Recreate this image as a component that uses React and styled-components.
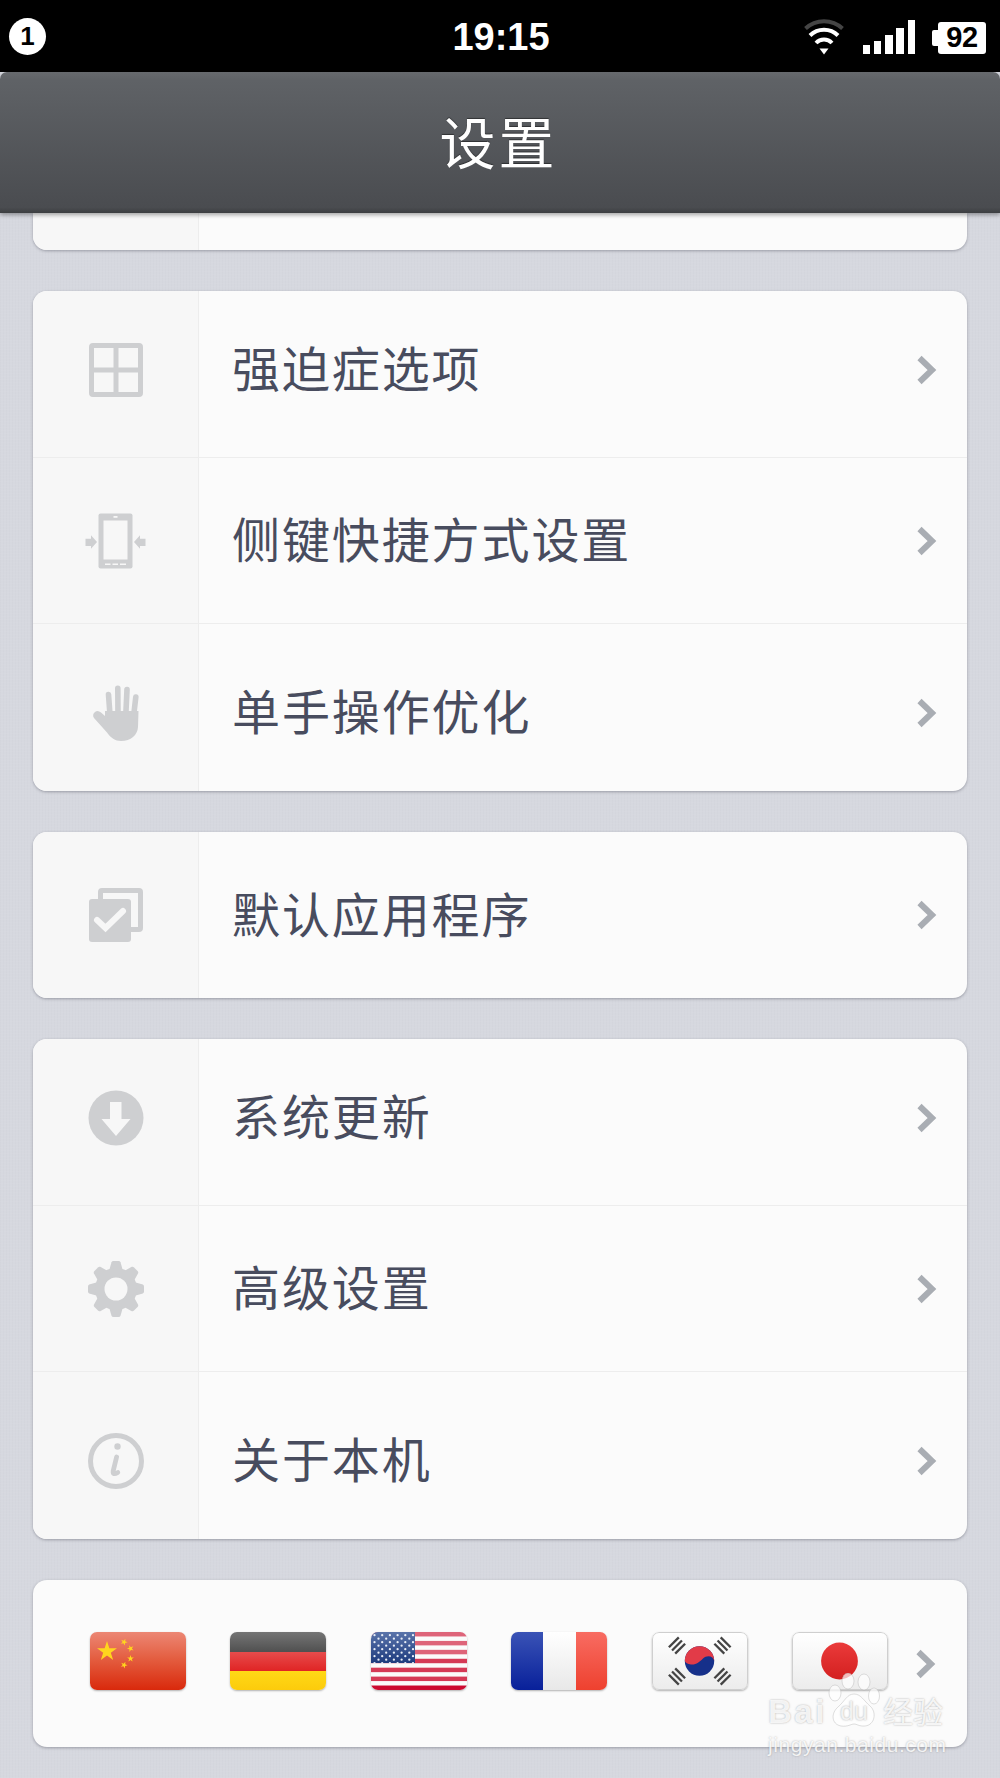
import React from "react";
import styled, { createGlobalStyle } from "styled-components";

const GlobalStyle = createGlobalStyle`
  html, body {
    margin: 0;
    padding: 0;
    background: #000;
  }
  * {
    box-sizing: border-box;
  }
`;

const CJK = `"Noto Sans CJK SC", "Noto Sans", sans-serif`;
const ICON = "#cecfd1";
const CELL = "#f7f7f7";

const Page = styled.div`
  position: relative;
  width: 1000px;
  height: 1778px;
  overflow: hidden;
  background-color: #d6d8df;
  background-image:
    repeating-linear-gradient(0deg, rgba(255, 255, 255, 0.035) 0 1px, transparent 1px 3px),
    repeating-linear-gradient(90deg, rgba(90, 95, 110, 0.02) 0 1px, transparent 1px 3px);
  font-family: ${CJK};
`;

const StatusBar = styled.div`
  position: relative;
  height: 72px;
  background: #000;
  display: grid;
  grid-template-columns: 1fr auto 1fr;
  align-items: center;
  padding: 0 14px 0 9px;
`;

const Badge = styled.div`
  width: 37px;
  height: 37px;
  border-radius: 50%;
  background: #fff;
  color: #000;
  display: flex;
  align-items: center;
  justify-content: center;
  font: bold 26px "Liberation Sans", sans-serif;
`;

const Clock = styled.div`
  color: #fff;
  font: bold 38px "Liberation Sans", sans-serif;
  margin: 2px 0 0 7px;
`;

const StatusIcons = styled.div`
  display: flex;
  align-items: flex-end;
  justify-content: flex-end;
  height: 36px;
  margin-top: 1px;
`;

const SignalBars = styled.div`
  display: flex;
  align-items: flex-end;
  gap: 3.7px;
  height: 34px;
  margin-left: 16px;
  margin-bottom: 1px;
`;

const SignalBar = styled.div`
  width: 7.5px;
  height: ${({ $h }) => $h}px;
  background: #fff;
`;

const Battery = styled.div`
  position: relative;
  width: 48px;
  height: 32px;
  margin-left: 23px;
  margin-bottom: 1px;
  background: #fff;
  border-radius: 3px;
  color: #000;
  display: flex;
  align-items: center;
  justify-content: center;
  font: bold 29px "Liberation Sans", sans-serif;
  letter-spacing: -0.5px;

  &::before {
    content: "";
    position: absolute;
    left: -6px;
    top: 8px;
    width: 6px;
    height: 16px;
    background: #fff;
    border-radius: 2px 0 0 2px;
  }
`;

const Header = styled.header`
  position: relative;
  z-index: 2;
  height: 141px;
  border-radius: 7px 7px 0 0;
  background: linear-gradient(#676a6e 0, #5f6266 6%, #4a4c50 96%, #3c3e41 100%);
  box-shadow: 0 2px 4px rgba(0, 0, 0, 0.35);
  display: flex;
  align-items: center;
  justify-content: center;
`;

const Title = styled.h1`
  margin: 0 0 5px -3px;
  color: #fff;
  font-size: 56px;
  font-weight: 400;
  letter-spacing: 3px;
  line-height: 1;
  text-shadow: 0 -1px 1px rgba(0, 0, 0, 0.45);
`;

const List = styled.main`
  display: flex;
  flex-direction: column;
  gap: 41px;
  padding: 0 33px;
`;

const Card = styled.section`
  background: #fbfbfb;
  border-radius: ${({ $clipped }) => ($clipped ? "0 0 14px 14px" : "14px")};
  box-shadow: 0 1px 3px rgba(70, 72, 85, 0.42);
  overflow: hidden;
`;

const ClippedRow = styled.div`
  height: 37px;
  display: grid;
  grid-template-columns: 166px 1fr;
`;

const Row = styled.div`
  display: grid;
  grid-template-columns: 166px 1fr;
  height: 166px;
  border-top: ${({ $first }) => ($first ? "none" : "1px solid #ededed")};

  &:last-child:not(:first-child) {
    height: 168px;
  }
`;

const IconCell = styled.div`
  background: ${CELL};
  border-right: 1px solid #ededed;
  display: flex;
  align-items: center;
  justify-content: center;
  padding: ${({ $top }) => $top || 0}px 0 ${({ $bottom }) => $bottom || 0}px;
`;

const Body = styled.div`
  display: flex;
  align-items: center;
  justify-content: space-between;
  padding: ${({ $top }) => $top || 0}px 30px ${({ $bottom }) => $bottom || 0}px 33px;
`;

const Label = styled.span`
  color: #484c5e;
  font-size: 48px;
  font-weight: 400;
  letter-spacing: 1.9px;
  line-height: 1;
  margin-bottom: 7px;
`;

const Chevron = styled.svg`
  width: 20px;
  height: 30px;
  flex: none;
`;

const FlagRow = styled.div`
  display: flex;
  align-items: center;
  height: 167px;
  padding: 0 31px 0 57px;
`;

const Flags = styled.div`
  display: flex;
  gap: 44.4px;
  margin-top: -6px;
  flex: 1;
`;

const FlagFrame = styled.div`
  width: 96px;
  height: 58px;
  border-radius: 7px;
  overflow: hidden;
  box-shadow: 0 1px 2px rgba(0, 0, 0, 0.3);
  flex: none;

  svg {
    display: block;
  }
`;

const Watermark = styled.div`
  position: absolute;
  left: 768px;
  top: 1673px;
  width: 180px;
  color: rgba(255, 255, 255, 0.85);
  text-shadow: 0 0 2px rgba(110, 110, 110, 0.55);
  pointer-events: none;
`;

const WatermarkTop = styled.div`
  display: flex;
  align-items: flex-end;
  height: 54px;
`;

const WatermarkWord = styled.span`
  font: bold 33px "Liberation Sans", sans-serif;
  line-height: 30px;
  letter-spacing: 2.5px;
  width: 60px;
`;

const WatermarkCjk = styled.span`
  font-family: ${CJK};
  font-size: 30px;
  line-height: 34px;
  margin-left: 3px;
  white-space: nowrap;
`;

const PawBox = styled.div`
  position: relative;
  width: 52px;
  height: 54px;
`;

const PawText = styled.span`
  position: absolute;
  left: 12px;
  bottom: 3px;
  color: #f2f2f2;
  font: 25px "Liberation Sans", sans-serif;
  line-height: 25px;
`;

const WatermarkUrl = styled.div`
  font: 21px "Liberation Sans", sans-serif;
  line-height: 24px;
  letter-spacing: 0.55px;
  margin-top: 6px;
  white-space: nowrap;
`;

const starPoints = (cx, cy, r, rot = 0) => {
  const pts = [];
  for (let i = 0; i < 10; i++) {
    const rad = i % 2 ? r * 0.382 : r;
    const a = (Math.PI / 5) * i - Math.PI / 2 + rot;
    pts.push(`${(cx + rad * Math.cos(a)).toFixed(2)},${(cy + rad * Math.sin(a)).toFixed(2)}`);
  }
  return pts.join(" ");
};

const WifiIcon = () => (
  <svg width="46" height="36" viewBox="0 0 42 36" fill="none" strokeWidth="4">
    <path d="M2.5 9.5A27 27 0 0 1 39.5 9.5" stroke="#454545" />
    <path d="M7 16.5A20 20 0 0 1 35 16.5" stroke="#fff" />
    <path d="M13 24A11 11 0 0 1 29 24" stroke="#fff" />
    <path d="M16.5 29.5H25.5L21 35.5Z" fill="#fff" />
  </svg>
);

const GridIcon = () => (
  <svg width="54" height="54" viewBox="0 0 54 54" fill="none" stroke={ICON} strokeWidth="5">
    <rect x="2.5" y="2.5" width="49" height="49" rx="1.5" />
    <path d="M27 2V52M2 27H52" />
  </svg>
);

const PhoneIcon = () => (
  <svg width="62" height="56" viewBox="0 0 62 56">
    <rect x="13.5" y="0.5" width="34" height="55" rx="2" fill={ICON} />
    <rect x="18.5" y="7.5" width="24" height="39" fill={CELL} />
    <rect x="28.5" y="3" width="4" height="1.8" fill={CELL} />
    <path d="M20 50.5H25.5V52H20ZM27.5 50.5H33V52H27.5ZM35 50.5H41V52H35Z" fill={CELL} />
    <path d="M0.5 25.7H6V22.3L12 29L6 35.7V33H0.5Z" fill={ICON} />
    <path d="M60.5 25.7H55V22.3L49 29L55 35.7V33H60.5Z" fill={ICON} />
  </svg>
);

const HandIcon = () => (
  <svg width="47" height="56" viewBox="0 0 47 56" fill={ICON}>
    <path d="M3 27C5 25.5 7 26 9 27.5L13 31V26H46.5L46 42C45.5 50 39 56 29 56C23 56 19 53 15 47.5L2 33C0.5 31 1 28.5 3 27Z" />
    <g stroke={ICON} strokeWidth="5.6" strokeLinecap="round">
      <path d="M16.5 9.5L18 30" />
      <path d="M25.8 3.2L26 30" />
      <path d="M35 4.5L33.8 30" />
      <path d="M43.8 12L41.5 32" />
    </g>
  </svg>
);

const AppsIcon = () => (
  <svg width="54" height="54" viewBox="0 0 54 54" fill="none">
    <rect x="11.5" y="2.5" width="40" height="39" rx="1.5" stroke={ICON} strokeWidth="5" />
    <rect x="0" y="11" width="42" height="43" rx="3" fill={ICON} />
    <path d="M8 32L16.5 40L34 23" stroke={CELL} strokeWidth="6" strokeLinecap="round" />
  </svg>
);

const UpdateIcon = () => (
  <svg width="56" height="56" viewBox="0 0 56 56">
    <circle cx="28" cy="28" r="27.5" fill={ICON} />
    <path d="M22 12H33.5V29H42.5L28 46L13.5 29H22Z" fill={CELL} strokeLinejoin="round" />
  </svg>
);

const GearIcon = () => (
  <svg width="56" height="56" viewBox="0 0 56 56">
    {[0, 45, 90, 135, 180, 225, 270, 315].map((deg) => (
      <path key={deg} d="M21 10L23.5 1.2Q24 0 25.5 0H30.5Q32 0 32.5 1.2L35 10Z" fill={ICON} transform={`rotate(${deg} 28 28)`} />
    ))}
    <circle cx="28" cy="28" r="21" fill={ICON} />
    <circle cx="28" cy="28" r="11.5" fill={CELL} />
  </svg>
);

const InfoIcon = () => (
  <svg width="56" height="56" viewBox="0 0 56 56" fill="none" stroke={ICON}>
    <circle cx="28" cy="28" r="25.5" strokeWidth="5" />
    <circle cx="29.5" cy="13.5" r="3.2" fill={ICON} stroke="none" />
    <path d="M28.6 24L25.2 38Q24.6 42.5 29.8 39.5" strokeWidth="4.8" strokeLinecap="round" />
  </svg>
);

const Gradient = ({ id, stops }) => (
  <linearGradient id={id} x1="0" y1="0" x2="0" y2="1">
    {stops.map(([o, c]) => (
      <stop key={o} offset={o} stopColor={c} />
    ))}
  </linearGradient>
);

const ChinaFlag = () => (
  <svg width="96" height="58" viewBox="0 0 96 58">
    <defs>
      <Gradient id="cn" stops={[[0, "#ec8774"], [0.5, "#e35a3c"], [1, "#d9290c"]]} />
    </defs>
    <rect width="96" height="58" fill="url(#cn)" />
    <polygon points={starPoints(17, 19.5, 10.5)} fill="#ffd51e" />
    <polygon points={starPoints(34, 10, 3.6, 0.4)} fill="#ffd51e" />
    <polygon points={starPoints(40.5, 16.5, 3.6, 0.9)} fill="#ffd51e" />
    <polygon points={starPoints(40.5, 26.5, 3.6, 0)} fill="#ffd51e" />
    <polygon points={starPoints(34, 33, 3.6, 0.4)} fill="#ffd51e" />
  </svg>
);

const GermanyFlag = () => (
  <svg width="96" height="58" viewBox="0 0 96 58">
    <defs>
      <Gradient id="de1" stops={[[0, "#757575"], [1, "#505050"]]} />
      <Gradient id="de2" stops={[[0, "#e74c4c"], [1, "#e02424"]]} />
      <Gradient id="de3" stops={[[0, "#ffd916"], [1, "#fccb0c"]]} />
    </defs>
    <rect width="96" height="20" fill="url(#de1)" />
    <rect y="20" width="96" height="19" fill="url(#de2)" />
    <rect y="39" width="96" height="19" fill="url(#de3)" />
  </svg>
);

const UsaFlag = () => {
  const stripes = Array.from({ length: 7 }, (_, i) => i * 8.92);
  const stars = [];
  for (let r = 0; r < 9; r++) {
    const count = r % 2 ? 5 : 6;
    for (let c = 0; c < count; c++) {
      stars.push([(r % 2 ? 7.5 : 3.5) + c * 7.7, 3.2 + r * 3.5]);
    }
  }
  return (
    <svg width="96" height="58" viewBox="0 0 96 58">
      <defs>
        <Gradient id="us2" stops={[[0, "#5a74aa"], [1, "#1e3b7e"]]} />
      </defs>
      <rect width="96" height="58" fill="#fbfbfb" />
      {stripes.map((y) => (
        <rect key={y} y={y} width="96" height="4.46" fill={y < 22 ? "#de6479" : y < 45 ? "#d53a56" : "#cc0a30"} />
      ))}
      <rect width="44" height="31" fill="url(#us2)" />
      {stars.map(([x, y]) => (
        <circle key={`${x}-${y}`} cx={x} cy={y} r="1.15" fill="#e8edf6" />
      ))}
    </svg>
  );
};

const FranceFlag = () => (
  <svg width="96" height="58" viewBox="0 0 96 58">
    <defs>
      <Gradient id="fr1" stops={[[0, "#3a53b6"], [1, "#08209a"]]} />
      <Gradient id="fr2" stops={[[0, "#ffffff"], [1, "#e8e8e8"]]} />
      <Gradient id="fr3" stops={[[0, "#f86c62"], [1, "#ee412f"]]} />
    </defs>
    <rect width="32" height="58" fill="url(#fr1)" />
    <rect x="32" width="33" height="58" fill="url(#fr2)" />
    <rect x="65" width="31" height="58" fill="url(#fr3)" />
  </svg>
);

const Trigram = ({ x, y, deg }) => (
  <g transform={`translate(${x} ${y}) rotate(${deg})`} fill="#444">
    <rect x="-7" y="-5.6" width="14" height="2.3" />
    <rect x="-7" y="-1.15" width="14" height="2.3" />
    <rect x="-7" y="3.3" width="14" height="2.3" />
  </g>
);

const KoreaFlag = () => (
  <svg width="96" height="58" viewBox="0 0 96 58">
    <defs>
      <Gradient id="kr0" stops={[[0, "#ffffff"], [1, "#ececec"]]} />
    </defs>
    <rect x="0.5" y="0.5" width="95" height="57" rx="6.5" fill="url(#kr0)" stroke="#cfcfcf" />
    <Trigram x="25" y="13.5" deg={-45} />
    <Trigram x="70.5" y="13.5" deg={45} />
    <Trigram x="25" y="44.5" deg={45} />
    <Trigram x="70.5" y="44.5" deg={-45} />
    <circle cx="47.5" cy="29" r="14.7" fill="#16308a" />
    <path d="M32.8 29A14.7 14.7 0 0 1 62.2 29C61.5 23.5 54.5 23 51 26.5C47.5 30 44 33 39 32.5C35.5 32 33.5 31 32.8 29Z" fill="#e23b48" />
  </svg>
);

const JapanFlag = () => (
  <svg width="96" height="58" viewBox="0 0 96 58">
    <defs>
      <Gradient id="jp0" stops={[[0, "#ffffff"], [1, "#ececec"]]} />
      <Gradient id="jp1" stops={[[0, "#ea3a3a"], [1, "#d42020"]]} />
    </defs>
    <rect x="0.5" y="0.5" width="95" height="57" rx="6.5" fill="url(#jp0)" stroke="#cfcfcf" />
    <circle cx="47.5" cy="29" r="18.4" fill="url(#jp1)" />
  </svg>
);

const Arrow = () => (
  <Chevron viewBox="0 0 20 30" fill="none">
    <path d="M2.5 3L15 15L2.5 27" stroke="#a9adb3" strokeWidth="6" />
  </Chevron>
);

// content in the first and last row sits a bit off the row's centre
const SettingRow = ({ icon, label, first, top, bottom }) => (
  <Row $first={first}>
    <IconCell $top={top} $bottom={bottom}>{icon}</IconCell>
    <Body $top={top} $bottom={bottom}>
      <Label>{label}</Label>
      <Arrow />
    </Body>
  </Row>
);

const App = () => (
  <Page>
    <GlobalStyle />
    <StatusBar>
      <Badge>1</Badge>
      <Clock>19:15</Clock>
      <StatusIcons>
        <WifiIcon />
        <SignalBars>
          {[9, 13, 19, 26, 34].map((h) => (
            <SignalBar key={h} $h={h} />
          ))}
        </SignalBars>
        <Battery>92</Battery>
      </StatusIcons>
    </StatusBar>
    <Header>
      <Title>设置</Title>
    </Header>
    <List>
      <Card $clipped>
        <ClippedRow>
          <IconCell />
          <Body />
        </ClippedRow>
      </Card>
      <Card>
        <SettingRow first icon={<GridIcon />} label="强迫症选项" bottom={9} />
        <SettingRow icon={<PhoneIcon />} label="侧键快捷方式设置" />
        <SettingRow icon={<HandIcon />} label="单手操作优化" top={10} />
      </Card>
      <Card>
        <SettingRow first icon={<AppsIcon />} label="默认应用程序" />
      </Card>
      <Card>
        <SettingRow first icon={<UpdateIcon />} label="系统更新" bottom={9} />
        <SettingRow icon={<GearIcon />} label="高级设置" />
        <SettingRow icon={<InfoIcon />} label="关于本机" top={10} />
      </Card>
      <Card>
        <FlagRow>
          <Flags>
            <FlagFrame><ChinaFlag /></FlagFrame>
            <FlagFrame><GermanyFlag /></FlagFrame>
            <FlagFrame><UsaFlag /></FlagFrame>
            <FlagFrame><FranceFlag /></FlagFrame>
            <FlagFrame><KoreaFlag /></FlagFrame>
            <FlagFrame><JapanFlag /></FlagFrame>
          </Flags>
          <Arrow />
        </FlagRow>
      </Card>
    </List>
    <Watermark>
      <WatermarkTop>
        <WatermarkWord>Bai</WatermarkWord>
        <PawBox>
          <svg width="52" height="54" viewBox="0 0 52 54" fill="rgba(255,255,255,0.7)" stroke="rgba(150,150,150,0.3)">
            <ellipse cx="7" cy="20" rx="6" ry="8" />
            <ellipse cx="20" cy="8" rx="6" ry="8" />
            <ellipse cx="36" cy="9" rx="6" ry="8" />
            <ellipse cx="46" cy="23" rx="5.5" ry="8" />
            <path d="M26 21C33 21 36 28 42 33C49 39 47 52 37 53C31 53.5 29 51 26 51C23 51 20 54 13 53C3 51 3 40 10 34C17 28 19 21 26 21Z" />
          </svg>
          <PawText>du</PawText>
        </PawBox>
        <WatermarkCjk>经验</WatermarkCjk>
      </WatermarkTop>
      <WatermarkUrl>jingyan.baidu.com</WatermarkUrl>
    </Watermark>
  </Page>
);

export default App;
